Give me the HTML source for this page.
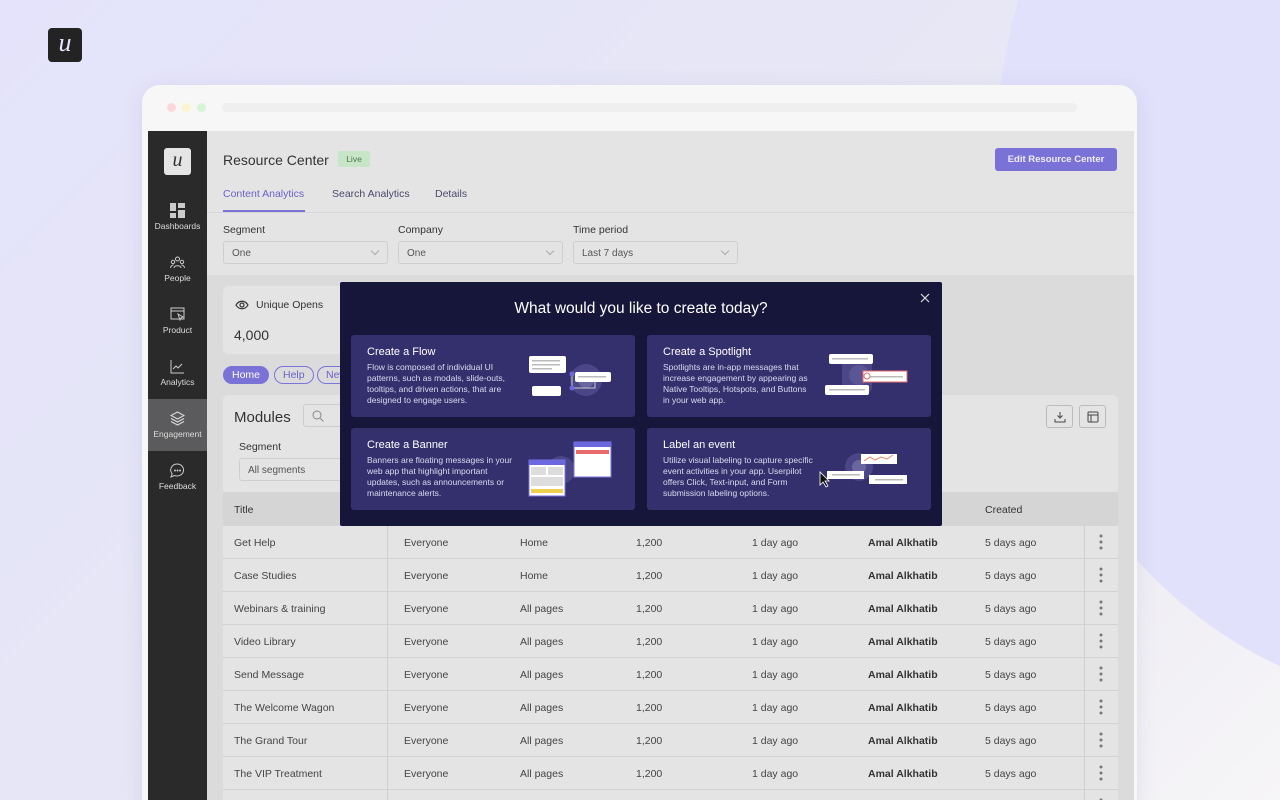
<!DOCTYPE html>
<html><head><meta charset="utf-8"><style>
*{box-sizing:border-box;margin:0;padding:0}
html{width:1280px;height:800px;overflow:hidden;background:#f3f2f6}
body{width:1280px;height:800px;overflow:hidden;font-family:"Liberation Sans",sans-serif;background:linear-gradient(135deg,#e4e3fb 0%,#e6e6f6 40%,#ebe9f2 70%,#f6f5f7 100%);position:relative}
.circle{position:absolute;left:995px;top:-360px;width:880px;height:1060px;border-radius:50%;background:#e1e1fb}
.logo{position:absolute;left:48px;top:28px;width:34px;height:34px;border-radius:4px;background:#232323;color:#e8e6ff;font-family:"Liberation Serif",serif;font-style:italic;font-size:26px;text-align:center;line-height:30px}
.win{position:absolute;left:142px;top:85px;width:995px;height:740px;background:#f7f7f7;border-radius:18px;box-shadow:0 4px 20px rgba(120,120,170,.15)}
.dot{position:absolute;top:18px;width:9px;height:9px;border-radius:50%}
.url{position:absolute;left:80px;top:18px;width:855px;height:9px;border-radius:5px;background:#efefef}
.app{position:absolute;left:148px;top:131px;width:986px;height:669px;background:#dcdbdc;overflow:hidden}
.side{position:absolute;left:0;top:0;width:59px;height:669px;background:#2a2a2b;color:#ddd;font-size:8.5px;text-align:center}
.side .it{position:absolute;left:0;width:59px}
.side svg{display:block;margin:0 auto 3px}
.slogo{position:absolute;left:16px;top:17px;width:27px;height:27px;border-radius:3px;background:#e5e5e5;color:#333;font-family:"Liberation Serif",serif;font-style:italic;font-size:20px;line-height:25px}
.hdr{position:absolute;left:59px;top:0;width:927px;height:144px;background:#e5e4e5}
.t{position:absolute;white-space:nowrap}
.sel{position:absolute;height:23px;border:1px solid #cfcfcf;border-radius:3px;background:#e5e4e5;font-size:10px;color:#555;padding:6px 8px}
.sel:after{content:"";position:absolute;right:9px;top:6px;width:5px;height:5px;border-right:1px solid #aaa;border-bottom:1px solid #aaa;transform:rotate(45deg)}
.card{position:absolute;background:#e5e4e5;border-radius:5px}
.pill{position:absolute;top:235px;height:18px;border:1px solid #7c74d9;border-radius:9px;font-size:10.5px;color:#6a62c8;padding:2px 8px}
.row{position:absolute;left:75px;width:895px;height:33px;background:#e5e4e5;border-bottom:1px solid #d4d3d4;font-size:10.5px;color:#444}
.row span{position:absolute;top:11px}
.row .b{font-weight:bold;color:#333}
.modal{position:absolute;left:340px;top:282px;width:602px;height:244px;background:#16153a;border-radius:2px;color:#fff}
.mc{position:absolute;width:284px;height:82px;background:#34306e;border-radius:3px}
.mc h4{position:absolute;left:16px;top:11px;font-size:11px;font-weight:normal}
.mc p{position:absolute;left:16px;top:27px;width:152px;font-size:8.5px;line-height:11px;color:#dcdaf0}
</style></head><body>
<div class="circle"></div>
<div class="logo">u</div>
<div class="win">
<div class="dot" style="left:25px;background:#fbd9d9"></div><div class="dot" style="left:40px;background:#fbf4cf"></div><div class="dot" style="left:55px;background:#d7f4d9"></div>
<div class="url"></div>
</div>
<div class="app">
<div class="side">
<div class="slogo">u</div>
<div class="it" style="top:72px"><svg width="15" height="15" viewBox="0 0 15 15" fill="#ccc"><rect x="0" y="0" width="6" height="8"/><rect x="8" y="0" width="7" height="5"/><rect x="0" y="10" width="6" height="5"/><rect x="8" y="7" width="7" height="8"/></svg>Dashboards</div>
<div class="it" style="top:124px"><svg width="15" height="15" viewBox="0 0 15 15" fill="none" stroke="#ccc"><circle cx="7.5" cy="4" r="2"/><circle cx="3" cy="7" r="1.7"/><circle cx="12" cy="7" r="1.7"/><path d="M4 13c0-3 7-3 7 0M0.5 13c0-2 2-3 3-3M14.5 13c0-2-2-3-3-3"/></svg>People</div>
<div class="it" style="top:176px"><svg width="15" height="15" viewBox="0 0 15 15" fill="none" stroke="#ccc"><rect x="1" y="1" width="13" height="11"/><path d="M1 4h13M8 7l5 3-2 1-1 2z"/></svg>Product</div>
<div class="it" style="top:228px"><svg width="15" height="15" viewBox="0 0 15 15" fill="none" stroke="#ccc"><path d="M1 1v13h13M3 10l3-3 2 2 4-4"/></svg>Analytics</div>
<div class="it" style="top:268px;height:52px;background:#5b5a5c;padding-top:12px"><svg width="15" height="15" viewBox="0 0 15 15" fill="none" stroke="#ddd"><path d="M7.5 1l6.5 3.5-6.5 3.5L1 4.5zM1 7.5l6.5 3.5 6.5-3.5M1 10.5l6.5 3.5 6.5-3.5"/></svg>Engagement</div>
<div class="it" style="top:332px"><svg width="15" height="15" viewBox="0 0 15 15" fill="none" stroke="#ccc"><path d="M7.5 1a6.5 6 0 1 1-3 11.5L1 14l1.2-3.2A6.5 6 0 0 1 7.5 1z"/><circle cx="5" cy="7.5" r=".5" fill="#ccc"/><circle cx="7.5" cy="7.5" r=".5" fill="#ccc"/><circle cx="10" cy="7.5" r=".5" fill="#ccc"/></svg>Feedback</div>
</div>
<div class="hdr">
<div class="t" style="left:16px;top:21px;font-size:14px;color:#333">Resource Center</div>
<div class="t" style="left:131px;top:20px;width:32px;height:16px;background:#c7e6c8;border-radius:2px;font-size:8.5px;color:#4a7a4c;text-align:center;line-height:16px">Live</div>
<div class="t" style="left:788px;top:17px;width:122px;height:23px;background:#7a72d6;border-radius:3px;color:#eeeefc;font-size:9.5px;font-weight:bold;text-align:center;line-height:23px">Edit Resource Center</div>
<div class="t" style="left:16px;top:57px;font-size:10.5px;color:#6a62c8">Content Analytics</div>
<div class="t" style="left:16px;top:79px;width:82px;height:2px;background:#7a72d6"></div>
<div class="t" style="left:125px;top:57px;font-size:10.5px;color:#4a4a6a">Search Analytics</div>
<div class="t" style="left:228px;top:57px;font-size:10.5px;color:#4a4a6a">Details</div>
<div class="t" style="left:0;top:81px;width:927px;height:1px;background:#d8d7d8"></div>
<div class="t" style="left:16px;top:93px;font-size:10.5px;color:#333">Segment</div>
<div class="t" style="left:191px;top:93px;font-size:10.5px;color:#333">Company</div>
<div class="t" style="left:366px;top:93px;font-size:10.5px;color:#333">Time period</div>
<div class="sel" style="left:16px;top:110px;width:165px">One</div>
<div class="sel" style="left:191px;top:110px;width:165px">One</div>
<div class="sel" style="left:366px;top:110px;width:165px">Last 7 days</div>
</div>
<div class="card" style="left:75px;top:155px;width:130px;height:68px">
<svg style="position:absolute;left:12px;top:14px" width="14" height="10" viewBox="0 0 14 10" fill="none" stroke="#333" stroke-width="1.2"><path d="M1 5c3-5 9-5 12 0-3 5-9 5-12 0z"/><circle cx="7" cy="5" r="2"/></svg>
<div class="t" style="left:33px;top:13px;font-size:10.5px;color:#333">Unique Opens</div>
<div class="t" style="left:11px;top:41px;font-size:14px;color:#333">4,000</div>
</div>
<div class="pill" style="left:75px;background:#7a72d6;color:#fff;border-color:#7a72d6">Home</div>
<div class="pill" style="left:126px">Help</div>
<div class="pill" style="left:169px">New</div>
<div class="card" style="left:75px;top:264px;width:895px;height:130px">
<div class="t" style="left:11px;top:14px;font-size:15px;color:#333">Modules</div>
<div class="t" style="left:80px;top:9px;width:40px;height:23px;border:1px solid #ccc;border-radius:3px"><svg style="position:absolute;left:8px;top:5px" width="12" height="12" viewBox="0 0 12 12" fill="none" stroke="#888"><circle cx="5" cy="5" r="4"/><path d="M8 8l3.5 3.5"/></svg></div>
<div class="t" style="left:16px;top:46px;font-size:10.5px;color:#333">Segment</div>
<div class="sel" style="left:16px;top:63px;width:120px">All segments</div>
<div class="t" style="left:823px;top:10px;width:27px;height:23px;border:1px solid #bbb;border-radius:3px"><svg style="position:absolute;left:7px;top:5px" width="12" height="12" viewBox="0 0 12 12" fill="none" stroke="#444"><path d="M6 1v6M3.5 4.5L6 7l2.5-2.5M1 8v3h10V8"/></svg></div>
<div class="t" style="left:856px;top:10px;width:27px;height:23px;border:1px solid #bbb;border-radius:3px"><svg style="position:absolute;left:7px;top:5px" width="12" height="12" viewBox="0 0 12 12" fill="none" stroke="#444"><rect x="1" y="1" width="10" height="10" rx="1"/><path d="M1 4h10M4 4v7"/></svg></div>
</div>
<div class="t" style="left:75px;top:361px;width:895px;height:34px;background:#d6d5d6;font-size:10.5px;color:#333"><span style="position:absolute;left:11px;top:12px">Title</span><span style="position:absolute;left:762px;top:12px">Created</span></div>
</div>
<div style="position:absolute;left:148px;top:526px;width:986px;height:274px;overflow:hidden">
<div class="row" style="top:0"><span style="left:11px">Get Help</span><span style="left:181px">Everyone</span><span style="left:297px">Home</span><span style="left:413px">1,200</span><span style="left:529px">1 day ago</span><span class="b" style="left:645px">Amal Alkhatib</span><span style="left:762px">5 days ago</span></div>
<div class="row" style="top:33px"><span style="left:11px">Case Studies</span><span style="left:181px">Everyone</span><span style="left:297px">Home</span><span style="left:413px">1,200</span><span style="left:529px">1 day ago</span><span class="b" style="left:645px">Amal Alkhatib</span><span style="left:762px">5 days ago</span></div>
<div class="row" style="top:66px"><span style="left:11px">Webinars &amp; training</span><span style="left:181px">Everyone</span><span style="left:297px">All pages</span><span style="left:413px">1,200</span><span style="left:529px">1 day ago</span><span class="b" style="left:645px">Amal Alkhatib</span><span style="left:762px">5 days ago</span></div>
<div class="row" style="top:99px"><span style="left:11px">Video Library</span><span style="left:181px">Everyone</span><span style="left:297px">All pages</span><span style="left:413px">1,200</span><span style="left:529px">1 day ago</span><span class="b" style="left:645px">Amal Alkhatib</span><span style="left:762px">5 days ago</span></div>
<div class="row" style="top:132px"><span style="left:11px">Send Message</span><span style="left:181px">Everyone</span><span style="left:297px">All pages</span><span style="left:413px">1,200</span><span style="left:529px">1 day ago</span><span class="b" style="left:645px">Amal Alkhatib</span><span style="left:762px">5 days ago</span></div>
<div class="row" style="top:165px"><span style="left:11px">The Welcome Wagon</span><span style="left:181px">Everyone</span><span style="left:297px">All pages</span><span style="left:413px">1,200</span><span style="left:529px">1 day ago</span><span class="b" style="left:645px">Amal Alkhatib</span><span style="left:762px">5 days ago</span></div>
<div class="row" style="top:198px"><span style="left:11px">The Grand Tour</span><span style="left:181px">Everyone</span><span style="left:297px">All pages</span><span style="left:413px">1,200</span><span style="left:529px">1 day ago</span><span class="b" style="left:645px">Amal Alkhatib</span><span style="left:762px">5 days ago</span></div>
<div class="row" style="top:231px"><span style="left:11px">The VIP Treatment</span><span style="left:181px">Everyone</span><span style="left:297px">All pages</span><span style="left:413px">1,200</span><span style="left:529px">1 day ago</span><span class="b" style="left:645px">Amal Alkhatib</span><span style="left:762px">5 days ago</span></div>
<div class="row" style="top:264px"></div>
<div class="t" style="left:239px;top:0;width:1px;height:280px;background:#d0cfd0"></div>
<div class="t" style="left:936px;top:0;width:1px;height:280px;background:#d0cfd0"></div>
<svg style="position:absolute;left:950px;top:8px" width="6" height="270" viewBox="0 0 6 270" fill="#777">
<g id="d"><circle cx="3" cy="2" r="1.5"/><circle cx="3" cy="8" r="1.5"/><circle cx="3" cy="14" r="1.5"/></g>
<use href="#d" y="33"/><use href="#d" y="66"/><use href="#d" y="99"/><use href="#d" y="132"/><use href="#d" y="165"/><use href="#d" y="198"/><use href="#d" y="231"/><use href="#d" y="264"/></svg>
</div>
<div style="position:absolute;left:142px;top:131px;width:6px;height:669px;background:#f7f7f7"></div>
<div style="position:absolute;left:1134px;top:131px;width:3px;height:669px;background:#f7f7f7"></div>

<div class="modal">
<div class="t" style="left:0;width:602px;top:18px;text-align:center;font-size:15.5px">What would you like to create today?</div>
<svg style="position:absolute;left:580px;top:11px" width="10" height="10" viewBox="0 0 10 10" stroke="#ddd" stroke-width="1.2"><path d="M1 1l8 8M9 1L1 9"/></svg>
<div class="mc" style="left:11px;top:53px"><h4>Create a Flow</h4><p>Flow is composed of individual UI patterns, such as modals, slide-outs, tooltips, and driven actions, that are designed to engage users.</p>
<svg style="position:absolute;left:170px;top:15px" width="100" height="50" viewBox="0 0 100 50"><circle cx="65" cy="30" r="16" fill="#4a4688"/><circle cx="65" cy="30" r="8" fill="#6a66a0"/><rect x="8" y="6" width="37" height="17" rx="2" fill="#fff"/><rect x="11" y="10" width="28" height="1.5" fill="#bbb"/><rect x="11" y="14" width="28" height="1.5" fill="#bbb"/><rect x="11" y="18" width="20" height="1.5" fill="#bbb"/><path d="M51 24v14" stroke="#ccc"/><rect x="54" y="22" width="36" height="10" rx="2" fill="#fff"/><rect x="57" y="26" width="28" height="1.5" fill="#bbb"/><rect x="11" y="36" width="29" height="10" rx="2" fill="#fff"/><path d="M51 38h23v-6" stroke="#ccc" fill="none"/><circle cx="51" cy="24" r="2.5" fill="#6e68e0"/><circle cx="51" cy="38" r="2.5" fill="#6e68e0"/></svg></div>
<div class="mc" style="left:307px;top:53px"><h4>Create a Spotlight</h4><p>Spotlights are in-app messages that increase engagement by appearing as Native Tooltips, Hotspots, and Buttons in your web app.</p>
<svg style="position:absolute;left:170px;top:15px" width="100" height="50" viewBox="0 0 100 50"><rect x="25" y="8" width="30" height="35" rx="6" fill="#4a4688"/><circle cx="42" cy="25" r="10" fill="#5a5696"/><rect x="12" y="4" width="44" height="10" rx="2" fill="#fff"/><rect x="15" y="8" width="36" height="1.5" fill="#bbb"/><rect x="46" y="21" width="44" height="11" fill="#fff" stroke="#e86a6a"/><rect x="53" y="26" width="33" height="1.5" fill="#bbb"/><circle cx="50" cy="26" r="3" fill="none" stroke="#e86a6a"/><rect x="8" y="35" width="44" height="10" rx="2" fill="#fff"/><rect x="12" y="39" width="36" height="1.5" fill="#bbb"/></svg></div>
<div class="mc" style="left:11px;top:146px"><h4>Create a Banner</h4><p>Banners are floating messages in your web app that highlight important updates, such as announcements or maintenance alerts.</p>
<svg style="position:absolute;left:170px;top:12px" width="100" height="60" viewBox="0 0 100 60"><circle cx="40" cy="30" r="14" fill="#4a4688"/><rect x="53" y="2" width="37" height="35" fill="#fff" stroke="#7a72e0"/><rect x="53" y="2" width="37" height="5" fill="#6e68e0"/><rect x="55" y="10" width="33" height="4" fill="#e86a6a"/><rect x="8" y="20" width="36" height="36" fill="#fff" stroke="#7a72e0"/><rect x="8" y="20" width="36" height="5" fill="#6e68e0"/><rect x="10" y="27" width="15" height="8" fill="#ddd"/><rect x="27" y="27" width="15" height="8" fill="#ddd"/><rect x="10" y="37" width="32" height="9" fill="#ddd"/><rect x="10" y="49" width="32" height="4" fill="#f0d050"/></svg></div>
<div class="mc" style="left:307px;top:146px"><h4>Label an event</h4><p>Utilize visual labeling to capture specific event activities in your app. Userpilot offers Click, Text-input, and Form submission labeling options.</p>
<svg style="position:absolute;left:170px;top:14px" width="100" height="50" viewBox="0 0 100 50"><circle cx="42" cy="25" r="14" fill="#4a4688"/><circle cx="42" cy="25" r="7" fill="#6a66a0"/><rect x="44" y="12" width="36" height="10" fill="#fff"/><path d="M47 19l6-4 5 3 6-3 6 2 6-4" stroke="#e88a6a" fill="none"/><rect x="10" y="29" width="37" height="8" fill="#fff"/><rect x="15" y="32" width="28" height="1.5" fill="#bbb"/><rect x="52" y="33" width="38" height="9" fill="#fff"/><rect x="58" y="37" width="28" height="1.5" fill="#bbb"/><path d="M3 30l0 13 3-3 3 5 2-1-3-5 4 0z" fill="#111" stroke="#fff" stroke-width=".8"/></svg></div>
</div>
</body></html>
